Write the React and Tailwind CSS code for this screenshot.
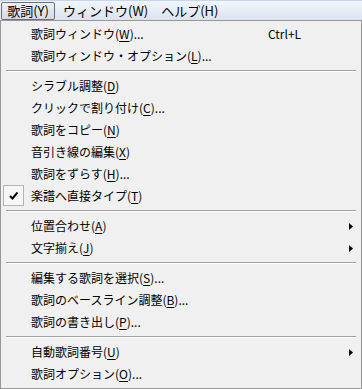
import React from 'react';

const font = { fontFamily: '"Noto Sans CJK JP", "Noto Sans", sans-serif' };

const U = ({ children }) => <span className="underline underline-offset-2">{children}</span>;

const Item = ({ label, mn, tail = '', shortcut, sub, checked }) => (
  <div className="relative flex h-[22px] items-center pl-[30px] pr-[12px] text-[12px] text-black">
    {checked && (
      <div className="absolute left-[2px] top-0 flex h-[21px] w-[21px] items-center justify-center border border-[#aeb5bd] bg-[#f7f7f7]">
        <svg width="10" height="9" viewBox="0 0 10 9">
          <path d="M1 5 L3.5 7.5 L8.5 1.5" fill="none" stroke="#000" strokeWidth="2" />
        </svg>
      </div>
    )}
    <span className="flex-1 whitespace-nowrap">
      {label}(<U>{mn}</U>){tail}
    </span>
    {shortcut && <span className="absolute left-[267px]">{shortcut}</span>}
    {sub && (
      <svg className="absolute left-[348px]" width="4" height="7" viewBox="0 0 4 7">
        <path d="M0 0 L4 3.5 L0 7 Z" fill="#000" />
      </svg>
    )}
  </div>
);

const Sep = () => (
  <div className="flex h-[8px] flex-col justify-center pl-[5px] pr-[5px]">
    <div className="h-px bg-[#a0a0a0]" />
    <div className="h-px bg-white" />
  </div>
);

export default function App() {
  return (
    <div className="h-[389px] w-[362px] bg-[#f0f0f0]" style={font}>
      <div className="flex h-[20px] items-center border-t border-[#c5d6ea] bg-gradient-to-b from-[#f3f6fb] to-[#dbe3ef] text-[13px] text-black">
        <div className="ml-[1px] flex h-[18px] w-[54px] items-center justify-center rounded-[2px] border border-[#707070] bg-gradient-to-b from-[#eef1f5] to-[#d6dbe2]">
          歌詞(Y)
        </div>
        <div className="ml-[8px] whitespace-nowrap">ウィンドウ(W)</div>
        <div className="ml-[13px] whitespace-nowrap">ヘルプ(H)</div>
      </div>
      <div className="h-[369px] border border-[#979797] bg-[#f0f0f0] pb-[3px] pt-[2px]">
        <Item label="歌詞ウィンドウ" mn="W" tail="..." shortcut="Ctrl+L" />
        <Item label="歌詞ウィンドウ・オプション" mn="L" tail="..." />
        <Sep />
        <Item label="シラブル調整" mn="D" />
        <Item label="クリックで割り付け" mn="C" tail="..." />
        <Item label="歌詞をコピー" mn="N" />
        <Item label="音引き線の編集" mn="X" />
        <Item label="歌詞をずらす" mn="H" tail="..." />
        <Item label="楽譜へ直接タイプ" mn="T" checked />
        <Sep />
        <Item label="位置合わせ" mn="A" sub />
        <Item label="文字揃え" mn="J" sub />
        <Sep />
        <Item label="編集する歌詞を選択" mn="S" tail="..." />
        <Item label="歌詞のベースライン調整" mn="B" tail="..." />
        <Item label="歌詞の書き出し" mn="P" tail="..." />
        <Sep />
        <Item label="自動歌詞番号" mn="U" sub />
        <Item label="歌詞オプション" mn="O" tail="..." />
      </div>
    </div>
  );
}
